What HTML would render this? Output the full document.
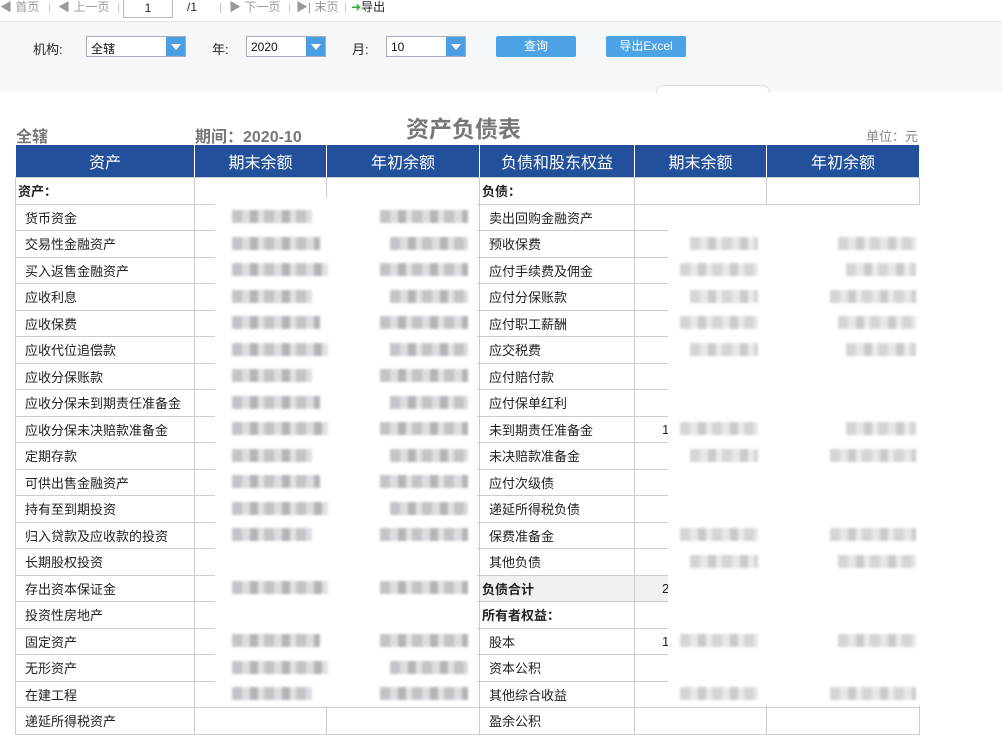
<!DOCTYPE html>
<html><head><meta charset="utf-8"><style>
*{margin:0;padding:0;box-sizing:border-box}
body{width:1002px;height:732px;overflow:hidden;background:#fff;font-family:"Liberation Sans","Noto Sans CJK SC",sans-serif;font-size:13px;color:#222;position:relative}
.top{position:absolute;left:0;top:0;width:1002px;height:22px;border-bottom:1px solid #e3e6ea;background:#fff;color:#999;font-size:12px}
.top span{position:absolute;top:0;line-height:15px}
.filt{position:absolute;left:0;top:22px;width:1002px;height:70px;background:#f5f7f9}
.lbl{position:absolute;top:39px;font-size:13px;color:#222}
.sel{position:absolute;top:36px;height:21px;border:1px solid #aab;background:#fff;font-size:12px;padding:3px 0 0 4px;color:#111}
.sel i{position:absolute;right:0;top:0;width:19px;height:19px;background:#4a9de0}
.sel i:after{content:"";position:absolute;left:5px;top:7px;border:5px solid transparent;border-top:6px solid #fff}
.btn{position:absolute;top:36px;height:21px;background:#4ba3e6;color:#fff;font-size:12px;text-align:center;line-height:21px;border-radius:2px}
table{position:absolute;left:15px;top:144px;border-collapse:collapse;table-layout:fixed;width:904px}
td,th{border:1px solid #ccc;font-size:13px;white-space:nowrap;overflow:hidden}
th{background:#22509a;color:#fff;font-weight:normal;font-size:16px;height:33px;border-color:#fff #fff #ccc #fff}
td{height:26.5px;padding-left:9px}
td.b{font-weight:bold;padding-left:2px}
td.n{padding-left:27px}
.g{background:#f0f0f0}
.ov{position:absolute;background:#fff}
.bar{position:absolute;height:13px;filter:blur(1.2px);background:repeating-linear-gradient(90deg,#c4c4c8 0 10px,#dcdde0 10px 18px,#b4b4b8 18px 26px,#e2e2e4 26px 32px)}
</style></head><body>
<div class="top">
<span style="left:0">◀ 首页</span><span style="left:48px;color:#ccc">|</span>
<span style="left:58px">◀ 上一页</span><span style="left:117px;color:#ccc">|</span>
<div style="position:absolute;left:123px;top:0;width:50px;height:18px;border:1px solid #bbb;border-top:none;text-align:center;color:#222;line-height:16px">1</div>
<span style="left:187px;color:#222">/1</span><span style="left:219px;color:#ccc">|</span>
<span style="left:229px">▶ 下一页</span><span style="left:288px;color:#ccc">|</span>
<span style="left:296px">▶| 末页</span><span style="left:344px;color:#ccc">|</span>
<span style="left:351px;color:#222"><b style="color:#3a3;font-weight:normal">➜</b>导出</span>
</div>
<div class="filt"></div>
<div class="lbl" style="left:33px">机构:</div>
<div class="sel" style="left:86px;width:100px">全辖<i></i></div>
<div class="lbl" style="left:212px">年:</div>
<div class="sel" style="left:246px;width:80px">2020<i></i></div>
<div class="lbl" style="left:352px">月:</div>
<div class="sel" style="left:386px;width:80px">10<i></i></div>
<div class="btn" style="left:496px;width:80px">查询</div>
<div class="btn" style="left:606px;width:80px">导出Excel</div>
<div style="position:absolute;left:656px;top:85px;width:114px;height:8px;border:1px solid #ddd;border-bottom:none;border-radius:8px 8px 0 0;background:#fff"></div>
<div style="position:absolute;left:16px;top:123px;font-size:16px;font-weight:bold;color:#777">全辖</div>
<div style="position:absolute;left:195px;top:123px;font-size:16px;font-weight:bold;color:#777">期间：2020-10</div>
<div style="position:absolute;left:406px;top:110px;font-size:23px;font-weight:bold;color:#777">资产负债表</div>
<div style="position:absolute;left:866px;top:126px;font-size:13px;color:#888">单位：元</div>
<table>
<colgroup><col style="width:179px"><col style="width:132px"><col style="width:153px"><col style="width:155px"><col style="width:132px"><col style="width:153px"></colgroup>
<tr><th>资产</th><th>期末余额</th><th>年初余额</th><th>负债和股东权益</th><th>期末余额</th><th>年初余额</th></tr>
<tr><td class="b">资产：</td><td></td><td></td><td class="b">负债：</td><td></td><td></td></tr>
<tr><td>货币资金</td><td></td><td></td><td>卖出回购金融资产</td><td></td><td></td></tr>
<tr><td>交易性金融资产</td><td></td><td></td><td>预收保费</td><td></td><td></td></tr>
<tr><td>买入返售金融资产</td><td></td><td></td><td>应付手续费及佣金</td><td></td><td></td></tr>
<tr><td>应收利息</td><td></td><td></td><td>应付分保账款</td><td></td><td></td></tr>
<tr><td>应收保费</td><td></td><td></td><td>应付职工薪酬</td><td></td><td></td></tr>
<tr><td>应收代位追偿款</td><td></td><td></td><td>应交税费</td><td></td><td></td></tr>
<tr><td>应收分保账款</td><td></td><td></td><td>应付赔付款</td><td></td><td></td></tr>
<tr><td>应收分保未到期责任准备金</td><td></td><td></td><td>应付保单红利</td><td></td><td></td></tr>
<tr><td>应收分保未决赔款准备金</td><td></td><td></td><td>未到期责任准备金</td><td class="n">1</td><td></td></tr>
<tr><td>定期存款</td><td></td><td></td><td>未决赔款准备金</td><td></td><td></td></tr>
<tr><td>可供出售金融资产</td><td></td><td></td><td>应付次级债</td><td></td><td></td></tr>
<tr><td>持有至到期投资</td><td></td><td></td><td>递延所得税负债</td><td></td><td></td></tr>
<tr><td>归入贷款及应收款的投资</td><td></td><td></td><td>保费准备金</td><td></td><td></td></tr>
<tr><td>长期股权投资</td><td></td><td></td><td>其他负债</td><td></td><td></td></tr>
<tr><td>存出资本保证金</td><td></td><td></td><td class="b g">负债合计</td><td class="g n">2</td><td class="g"></td></tr>
<tr><td>投资性房地产</td><td></td><td></td><td class="b">所有者权益：</td><td></td><td></td></tr>
<tr><td>固定资产</td><td></td><td></td><td>股本</td><td class="n">1</td><td></td></tr>
<tr><td>无形资产</td><td></td><td></td><td>资本公积</td><td></td><td></td></tr>
<tr><td>在建工程</td><td></td><td></td><td>其他综合收益</td><td></td><td></td></tr>
<tr><td>递延所得税资产</td><td></td><td></td><td>盈余公积</td><td></td><td></td></tr>
</table>
<div class="ov" style="left:215px;top:198px;width:262px;height:508px"></div>
<div class="ov" style="left:668px;top:205px;width:254px;height:500px"></div>
<div id="bars"></div>
<script>
var L=[1,1,1,1,1,1,1,1,1,1,1,1,1,0,1,0,1,1,1];
var R=[0,1,1,1,1,1,0,0,1,1,0,0,1,1,0,0,1,0,1];
var h='';
for(var i=0;i<19;i++){var t=210+26.5*i;
if(L[i]){h+='<div class="bar" style="left:232px;top:'+t+'px;width:'+(80+(i%3)*8)+'px"></div><div class="bar" style="left:'+(380+(i%2)*10)+'px;top:'+t+'px;width:'+(88-(i%2)*10)+'px"></div>';}
if(R[i]){h+='<div class="bar" style="left:'+(680+(i%2)*10)+'px;top:'+t+'px;width:'+(78-(i%2)*10)+'px;opacity:.7"></div><div class="bar" style="left:'+(830+(i%3)*8)+'px;top:'+t+'px;width:'+(86-(i%3)*8)+'px;opacity:.7"></div>';}
}
document.getElementById('bars').innerHTML=h;
</script>
</body></html>
